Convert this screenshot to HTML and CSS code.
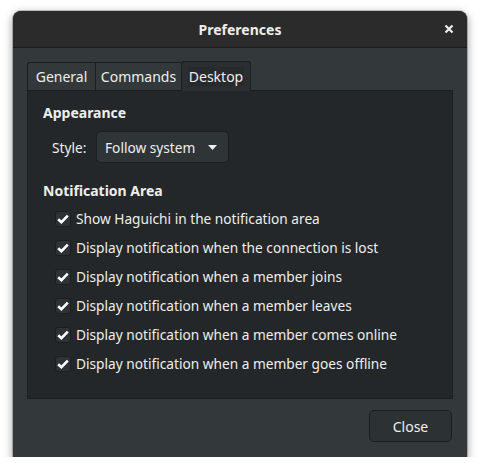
FILE: index.html
```html
<!DOCTYPE html>
<html>
<head>
<meta charset="utf-8">
<link rel="stylesheet" href="styles.css">
</head>
<body>
<div class="window">
  <div class="titlebar">
    <span class="title">Preferences</span>
    <span class="close-x"><svg width="10" height="10" viewBox="0 0 10 10"><path d="M1.5 1.5 L8.5 8.5 M8.5 1.5 L1.5 8.5" stroke="#eeeeec" stroke-width="2.2" stroke-linecap="butt"/></svg></span>
  </div>
  <div class="body">
    <div class="notebook">
      <div class="tabs">
        <div class="tab tab-general">General</div>
        <div class="tab tab-commands">Commands</div>
        <div class="tab active"><span class="tab-label">Desktop</span></div>
      </div>
      <div class="frame">
        <div class="section-title">Appearance</div>
        <div class="style-row">
          <span class="style-label">Style:</span>
          <div class="combo">
            <span>Follow system</span>
            <svg class="arrow" width="9" height="5" viewBox="0 0 9 5"><path d="M0 0 H9 L4.5 5 Z" fill="#eeeeec"/></svg>
          </div>
        </div>
        <div class="section-title notif">Notification Area</div>
        <div class="checks">
          <label class="check"><span class="box"><svg width="12" height="10" viewBox="0 0 12 10"><path d="M1.2 5.2 L4.4 8.2 L10.8 1.6" fill="none" stroke="#ffffff" stroke-width="2.6" stroke-linejoin="miter"/></svg></span>Show Haguichi in the notification area</label>
          <label class="check"><span class="box"><svg width="12" height="10" viewBox="0 0 12 10"><path d="M1.2 5.2 L4.4 8.2 L10.8 1.6" fill="none" stroke="#ffffff" stroke-width="2.6" stroke-linejoin="miter"/></svg></span>Display notification when the connection is lost</label>
          <label class="check"><span class="box"><svg width="12" height="10" viewBox="0 0 12 10"><path d="M1.2 5.2 L4.4 8.2 L10.8 1.6" fill="none" stroke="#ffffff" stroke-width="2.6" stroke-linejoin="miter"/></svg></span>Display notification when a member joins</label>
          <label class="check"><span class="box"><svg width="12" height="10" viewBox="0 0 12 10"><path d="M1.2 5.2 L4.4 8.2 L10.8 1.6" fill="none" stroke="#ffffff" stroke-width="2.6" stroke-linejoin="miter"/></svg></span>Display notification when a member leaves</label>
          <label class="check"><span class="box"><svg width="12" height="10" viewBox="0 0 12 10"><path d="M1.2 5.2 L4.4 8.2 L10.8 1.6" fill="none" stroke="#ffffff" stroke-width="2.6" stroke-linejoin="miter"/></svg></span>Display notification when a member comes online</label>
          <label class="check"><span class="box"><svg width="12" height="10" viewBox="0 0 12 10"><path d="M1.2 5.2 L4.4 8.2 L10.8 1.6" fill="none" stroke="#ffffff" stroke-width="2.6" stroke-linejoin="miter"/></svg></span>Display notification when a member goes offline</label>
        </div>
      </div>
    </div>
    <div class="actions">
      <button class="btn">Close</button>
    </div>
  </div>
</div>
</body>
</html>
```
FILE: styles.css
```css
* { box-sizing: border-box; }
html, body {
  margin: 0;
  padding: 0;
  background: #ffffff;
}
body {
  font-family: "Noto Sans", "Open Sans", sans-serif;
  font-size: 13.7px;
  color: #eeeeec;
  padding: 11px 0 0 13px;
}
.window {
  width: 454px;
  height: 446px;
  background: #33393b;
  border-radius: 8px 8px 0 0;
  box-shadow: 0 3px 9px 1px rgba(0,0,0,0.35), 0 0 0 1px rgba(0,0,0,0.2);
  display: flex;
  flex-direction: column;
  overflow: hidden;
}
.titlebar {
  height: 37px;
  flex: none;
  background: #2b2b2b;
  border-bottom: 1px solid #1b1b1b;
  display: flex;
  align-items: center;
  justify-content: center;
  position: relative;
}
.title {
  font-weight: bold;
  font-size: 14px;
  color: #eeeeec;
}
.close-x {
  position: absolute;
  right: 13px;
  top: 13px;
  width: 10px;
  height: 10px;
  display: flex;
}
.body {
  flex: 1;
  padding: 13px 14px 15px 14px;
  display: flex;
  flex-direction: column;
}
.notebook {
  display: flex;
  flex-direction: column;
}
.tabs {
  display: flex;
  align-items: flex-end;
  height: 29px;
}
.tab {
  height: 28px;
  display: flex;
  align-items: center;
  justify-content: center;
  border: 1px solid #1c1f20;
  border-bottom: none;
  border-right: none;
  background: #33393b;
  color: #eeeeec;
  font-size: 14px;
}
.tab-general { width: 68px; border-radius: 3px 0 0 0; }
.tab-commands { width: 86px; }
.tab.active {
  width: 70px;
  height: 30px;
  border: 1px solid #1c1f20;
  border-bottom: none;
  border-radius: 3px 3px 0 0;
  background: #2a2e30;
  margin-bottom: -1px;
  position: relative;
  z-index: 1;
}
.tab-label {
  background: #262a2c;
  padding: 0 1px;
}
.frame {
  height: 309px;
  background: #232729;
  border: 1px solid #1c1f20;
  padding: 12px 16px 0 15px;
}
.section-title {
  font-weight: bold;
  font-size: 14px;
  height: 20px;
  line-height: 20px;
}
.style-row {
  display: flex;
  align-items: center;
  margin-top: 8px;
  padding-left: 9px;
}
.style-label {
  width: 44px;
}
.combo {
  height: 32px;
  width: 133px;
  border: 1px solid #1c1f20;
  border-radius: 5px;
  background: #2f3436;
  display: flex;
  align-items: center;
  justify-content: space-between;
  padding: 0 11px 0 8px;
}
.arrow { display: block; }
.notif { margin-top: 18px; }
.checks {
  margin-top: 3px;
  display: flex;
  flex-direction: column;
}
.check {
  height: 29px;
  display: flex;
  align-items: center;
  padding-left: 12px;
}
.box {
  width: 16px;
  height: 16px;
  border: 1px solid #1c1f20;
  border-radius: 3px;
  background: #2d3234;
  display: flex;
  align-items: center;
  justify-content: center;
  margin-right: 5px;
}
.box svg { display: block; }
.actions {
  flex: 1;
  display: flex;
  justify-content: flex-end;
  align-items: flex-end;
}
.btn {
  width: 83px;
  height: 32px;
  margin-right: 1px;
  border: 1px solid #1c1f20;
  border-radius: 5px;
  background: #2c3133;
  color: #eeeeec;
  font-family: "Noto Sans", "Open Sans", sans-serif;
  font-size: 14px;
  padding: 0;
}
```
